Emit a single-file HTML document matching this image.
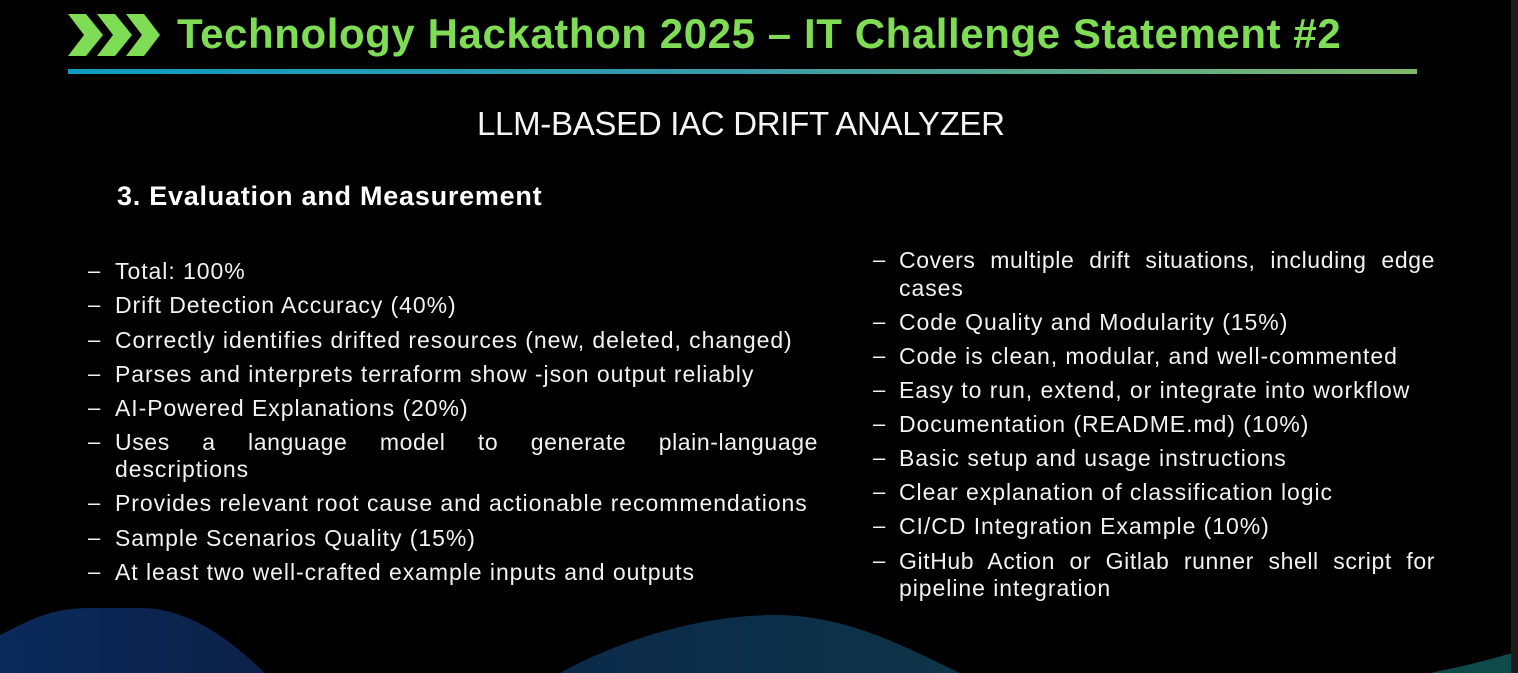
<!DOCTYPE html>
<html><head><meta charset="utf-8"><style>
*{margin:0;padding:0;box-sizing:border-box}
html,body{width:1518px;height:673px;background:#000;overflow:hidden}
body{position:relative;font-family:"Liberation Sans",sans-serif;color:#f2f2f2}
.l{position:absolute;font-size:23px;line-height:26px;white-space:nowrap;letter-spacing:0.95px}
.d{position:absolute;font-size:22px;line-height:26px}
.j{text-align:justify;text-align-last:justify;white-space:normal;letter-spacing:0.6px}
</style></head><body>
<svg style="position:absolute;left:0;top:0" width="1518" height="673">
<defs>
<linearGradient id="ul" x1="0" x2="1"><stop offset="0" stop-color="#0f9cc0"/><stop offset="0.5" stop-color="#3a9ba8"/><stop offset="1" stop-color="#80b86c"/></linearGradient>
<linearGradient id="w1" x1="0" x2="1"><stop offset="0" stop-color="#0a2a5a"/><stop offset="1" stop-color="#0d2148"/></linearGradient>
<linearGradient id="w2" x1="0" x2="1"><stop offset="0" stop-color="#0b2a4a"/><stop offset="1" stop-color="#0e3448"/></linearGradient>
</defs>
<g fill="#7fdc55">
<polygon points="68,14 86,14 103,35 86,56 68,56 84,35"/>
<polygon points="97,14 115,14 132,35 115,56 97,56 113,35"/>
<polygon points="126,14 144,14 160,35 144,56 126,56 142,35"/>
</g>
<rect x="68" y="69" width="1349" height="5" fill="url(#ul)"/>
<path d="M0,635 C30,620 50,608 90,608 L140,608 C190,608 230,640 265,673 L0,673 Z" fill="url(#w1)"/>
<path d="M560,673 C620,640 700,615 775,615 C850,615 910,650 960,673 Z" fill="url(#w2)"/>
<path d="M1430,673 C1470,665 1495,658 1512,653 L1512,673 Z" fill="#0f4a4a"/>
<rect x="1511" y="0" width="7" height="673" fill="#1c1c1c"/>
</svg>
<div style="position:absolute;left:177px;top:10px;font-size:42px;font-weight:bold;color:#7fdc55;letter-spacing:0.58px;white-space:nowrap">Technology Hackathon 2025 – IT Challenge Statement #2</div>
<div style="position:absolute;left:477px;top:105px;font-size:33px;letter-spacing:-0.3px;color:#f4f4f4;white-space:nowrap">LLM-BASED IAC DRIFT ANALYZER</div>
<div style="position:absolute;left:117px;top:181px;font-size:27px;font-weight:bold;color:#fff;white-space:nowrap;letter-spacing:0.75px">3. Evaluation and Measurement</div>

<div class="d" style="left:88px;top:258px">–</div><div class="l" style="left:115px;top:258px">Total: 100%</div>
<div class="d" style="left:88px;top:292px">–</div><div class="l" style="left:115px;top:292px">Drift Detection Accuracy (40%)</div>
<div class="d" style="left:88px;top:327px">–</div><div class="l" style="left:115px;top:327px">Correctly identifies drifted resources (new, deleted, changed)</div>
<div class="d" style="left:88px;top:361px">–</div><div class="l" style="left:115px;top:361px">Parses and interprets terraform show -json output reliably</div>
<div class="d" style="left:88px;top:395px">–</div><div class="l" style="left:115px;top:395px">AI-Powered Explanations (20%)</div>
<div class="d" style="left:88px;top:429px">–</div><div class="l j" style="left:115px;top:429px;width:703px">Uses a language model to generate plain-language</div>
<div class="l" style="left:115px;top:456px">descriptions</div>
<div class="d" style="left:88px;top:490px">–</div><div class="l" style="left:115px;top:490px">Provides relevant root cause and actionable recommendations</div>
<div class="d" style="left:88px;top:525px">–</div><div class="l" style="left:115px;top:525px">Sample Scenarios Quality (15%)</div>
<div class="d" style="left:88px;top:559px">–</div><div class="l" style="left:115px;top:559px">At least two well-crafted example inputs and outputs</div>

<div class="d" style="left:873px;top:247px">–</div><div class="l j" style="left:899px;top:247px;width:536px">Covers multiple drift situations, including edge</div>
<div class="l" style="left:899px;top:275px">cases</div>
<div class="d" style="left:873px;top:309px">–</div><div class="l" style="left:899px;top:309px">Code Quality and Modularity (15%)</div>
<div class="d" style="left:873px;top:343px">–</div><div class="l" style="left:899px;top:343px">Code is clean, modular, and well-commented</div>
<div class="d" style="left:873px;top:377px">–</div><div class="l" style="left:899px;top:377px">Easy to run, extend, or integrate into workflow</div>
<div class="d" style="left:873px;top:411px">–</div><div class="l" style="left:899px;top:411px">Documentation (README.md) (10%)</div>
<div class="d" style="left:873px;top:445px">–</div><div class="l" style="left:899px;top:445px">Basic setup and usage instructions</div>
<div class="d" style="left:873px;top:479px">–</div><div class="l" style="left:899px;top:479px">Clear explanation of classification logic</div>
<div class="d" style="left:873px;top:513px">–</div><div class="l" style="left:899px;top:513px">CI/CD Integration Example (10%)</div>
<div class="d" style="left:873px;top:548px">–</div><div class="l j" style="left:899px;top:548px;width:536px">GitHub Action or Gitlab runner shell script for</div>
<div class="l" style="left:899px;top:575px">pipeline integration</div>
</body></html>
